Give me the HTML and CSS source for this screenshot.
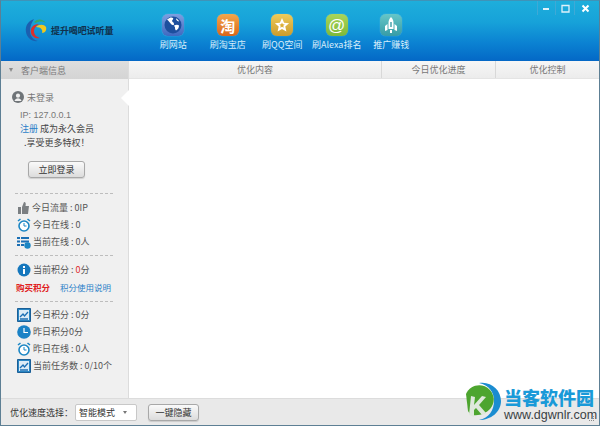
FILE: index.html
```html
<!DOCTYPE html>
<html lang="zh">
<head>
<meta charset="utf-8">
<title>提升喝吧试听量</title>
<link rel="stylesheet" href="styles.css">
</head>
<body>
<div class="window">
  <header class="top">
    <div class="logo">
      <svg class="logo-mark" width="22" height="26" viewBox="0 0 22 26">
        <path d="M9 2C3 4 0 9 1 15c1 6 6 10 12 9-5-1-8-5-8-10 0-5 2-9 4-12z" fill="#1b5fb0"/>
        <path d="M14 7C8 7 5 11 6 16c1 4 5 6 9 5-3-1-6-3-6-7 0-3 2-5 5-7z" fill="#d9302c"/>
        <path d="M9 5c4-4 9-3 12 1-3-2-7-2-10 0z" fill="#36a86a"/>
        <path d="M11 10c3-3 8-3 10 0 1 3-1 6-4 6 1-3-1-6-6-6z" fill="#f0c81e"/>
      </svg>
      <span class="logo-text">提升喝吧试听量</span>
    </div>
    <nav class="nav">
      <a class="nav-item">
        <span class="tile tile-web"><svg width="18" height="18" viewBox="0 0 18 18"><circle cx="9" cy="9" r="8.500" fill="#1d4f9e"/><path d="M3 3.500C6 1 8 1 9 2c1 1-1 2-1 3s2 1 2 3-2 1-3 0-2-3-4-4.500zM10 9.500c2-1 4-1 5 0 0 2-1 4-3 5-1-1-1-2-1-3s-1-1-1-2zM12 2.500c1 0 3 2 3 3-1 0-3-1-3-3z" fill="#fff"/></svg></span>
        <span class="nav-label">刷网站</span>
      </a>
      <a class="nav-item">
        <span class="tile tile-taobao"><span class="tile-glyph">淘</span></span>
        <span class="nav-label">刷淘宝店</span>
      </a>
      <a class="nav-item">
        <span class="tile tile-qq"><svg width="16" height="16" viewBox="0 0 16 16"><path d="M8 1l2.100 4.700 5 .5-3.800 3.400 1.100 5L8 12l-4.400 2.600 1.100-5L.9 6.200l5-.5z" fill="#fff"/><path d="M8 5.500l.8 1.800 2 .2-1.500 1.300.4 2L8 9.800l-1.700 1 .4-2-1.500-1.300 2-.2z" fill="#dcae35"/></svg></span>
        <span class="nav-label">刷QQ空间</span>
      </a>
      <a class="nav-item">
        <span class="tile tile-alexa"><span class="tile-at">@</span></span>
        <span class="nav-label">刷Alexa排名</span>
      </a>
      <a class="nav-item">
        <span class="tile tile-promo"><svg width="14" height="16" viewBox="0 0 14 16"><path d="M7 0c2 2 2.500 4 2.500 6v6h-5V6C4.500 4 5 2 7 0zM3.500 7v6L1 14V9zM10.500 7v6l2.500 1V9zM6 13h2v3H6z" fill="#fff"/><path d="M6.300 5h1.400v5H6.300z" fill="#3a9ca6"/></svg></span>
        <span class="nav-label">推广赚钱</span>
      </a>
    </nav>
    <div class="win-controls">
      <span class="win-btn"><svg width="9" height="9" viewBox="0 0 9 9"><path d="M1 4h6v2H1z" fill="#dff1fa"/></svg></span>
      <span class="win-btn win-max"><svg width="9" height="9" viewBox="0 0 9 9"><path d="M1 1.500h7v6.500H1z" fill="none" stroke="#dff1fa" stroke-width="1.300"/></svg></span>
      <span class="win-btn win-close"><svg width="9" height="9" viewBox="0 0 9 9"><path d="M1.500 1.500l6 6M7.500 1.500l-6 6" stroke="#fff" stroke-width="2"/></svg></span>
    </div>
  </header>

  <div class="middle">
    <aside class="side">
      <div class="side-head"><span class="caret"></span>客户端信息</div>
      <div class="side-body">
        <span class="notch"></span>
        <div class="user"><svg width="12" height="12" viewBox="0 0 12 12"><circle cx="6" cy="6" r="6" fill="#6f7478"/><circle cx="6" cy="4.700" r="2.100" fill="#f0f0f0"/><path d="M2.500 10c.5-2 2-2.800 3.500-2.800S9 8 9.500 10z" fill="#f0f0f0"/></svg>未登录</div>
        <div class="ip">IP: 127.0.0.1</div>
        <div class="promo"><a class="link">注册</a> 成为永久会员</div>
        <div class="promo promo-b">.享受更多特权！</div>
        <button class="btn btn-login">立即登录</button>
        <div class="rule rule-first"></div>
        <ul class="stats">
          <li><svg width="13" height="14" viewBox="0 0 13 14"><path d="M1 6h3v7H1zM5 6l2-5c2 0 2 2 1.500 4H12l-1 8H5z" fill="#7b7f82"/></svg><span>今日流量 : 0IP</span></li>
          <li><svg width="14" height="14" viewBox="0 0 14 14"><circle cx="7" cy="8" r="5" fill="#fff" stroke="#1b86c4" stroke-width="1.600"/><path d="M7 5v3h2.500" fill="none" stroke="#1b86c4"/><path d="M1 3l2.500-2M13 3l-2.500-2" stroke="#1b86c4" stroke-width="1.600"/></svg><span>今日在线 : 0</span></li>
          <li><svg width="14" height="14" viewBox="0 0 14 14"><path d="M0 2h3v2H0zM4 2h8v2H4zM0 5.500h3v2H0zM4 5.500h8v2H4zM0 9h3v2H0zM4 9h3v2H4z" fill="#1b6fb4"/><circle cx="10.500" cy="10.500" r="3.200" fill="#1b86c4"/></svg><span>当前在线 : 0人</span></li>
        </ul>
        <div class="rule"></div>
        <ul class="stats stats-score">
          <li><svg width="14" height="14" viewBox="0 0 14 14"><circle cx="7" cy="7" r="6.500" fill="#1577bd"/><path d="M6 3h2v2H6zM6 6h2v5H6z" fill="#fff"/></svg><span>当前积分 : <em class="red">0</em>分</span></li>
        </ul>
        <div class="buy"><a class="buy-link">购买积分</a><a class="link">积分使用说明</a></div>
        <div class="rule"></div>
        <ul class="stats stats-last">
          <li><svg width="14" height="14" viewBox="0 0 14 14"><path d="M.5.500h13v13H.5z" fill="#2a86c4" stroke="#1b5f96"/><path d="M2 2h10v10H2z" fill="#dcecf6"/><path d="M3 9l3-3 1.500 2L11 4M3 11h8" fill="none" stroke="#1b6fb4" stroke-width="1.300"/></svg><span>今日积分 : 0分</span></li>
          <li><svg width="14" height="14" viewBox="0 0 14 14"><circle cx="7" cy="7" r="6.800" fill="#1a82c6"/><path d="M7 3v4.500h4" fill="none" stroke="#fff" stroke-width="1.200"/></svg><span>昨日积分0分</span></li>
          <li><svg width="14" height="14" viewBox="0 0 14 14"><circle cx="7" cy="8" r="5" fill="#fff" stroke="#1b86c4" stroke-width="1.600"/><path d="M7 5v3h2.500" fill="none" stroke="#1b86c4"/><path d="M1 3l2.500-2M13 3l-2.500-2" stroke="#1b86c4" stroke-width="1.600"/></svg><span>昨日在线 : 0人</span></li>
          <li><svg width="14" height="14" viewBox="0 0 14 14"><path d="M.5.500h13v13H.5z" fill="#2a86c4" stroke="#1b5f96"/><path d="M2 2h10v10H2z" fill="#dcecf6"/><path d="M3 9l3-3 1.500 2L11 4M3 11h8" fill="none" stroke="#1b6fb4" stroke-width="1.300"/></svg><span>当前任务数 : 0/10个</span></li>
        </ul>
      </div>
    </aside>
    <main class="content">
      <div class="thead">
        <div class="th th-a">优化内容</div>
        <div class="th th-b">今日优化进度</div>
        <div class="th th-c">优化控制</div>
      </div>
    </main>
  </div>

  <footer class="bottom">
    <span class="speed-label">优化速度选择：</span>
    <span class="select">智能模式<span class="select-caret"></span></span>
    <button class="btn btn-hide">一键隐藏</button>
  </footer>

  <div class="watermark">
    <svg class="wm-logo" width="39" height="39" viewBox="0 0 39 39">
      <path d="M16 1c12-2 22 7 22 18S28 38 16 38c10-2 15-10 15-19S26 3 16 1z" fill="#1b8cd0"/>
      <path d="M3 12C7 3 19 0 27 8c5 6 5 13 0 19-4 4-10 7-17 6-3-1-4-2-5-4z" fill="#4da52f"/>
      <path d="M8 14l4 1-1 8 8-9 4 1-7 8 7 8-4 2-6-7-2 2 0 7-5-2z" fill="#dfe8dc"/>
    </svg>
    <div class="wm-title">当客软件园</div>
    <div class="wm-url">www.dgwnlr.com</div>
  </div>
  <svg class="grip" width="7" height="7" viewBox="0 0 7 7"><path d="M5 0h1v1H5zM3 2h1v1H3zM5 2h1v1H5zM1 4h1v1H1zM3 4h1v1H3zM5 4h1v1H5z" fill="#8a8a8a"/></svg>
</div>
</body>
</html>
```
FILE: styles.css
```css
* { box-sizing: border-box; }
html, body { margin: 0; padding: 0; }
body {
  width: 600px;
  height: 426px;
  overflow: hidden;
  font-family: "Noto Sans CJK SC", "Liberation Sans", sans-serif;
  font-size: 9px;
  color: #555;
}
.window {
  position: relative;
  width: 600px;
  height: 426px;
  display: flex;
  flex-direction: column;
  background: #fff;
  border: 1px solid #5d7f94;
  border-top-color: #3f93b8;
  overflow: hidden;
}
.top {
  height: 60px;
  flex: none;
  display: flex;
  background: linear-gradient(#1eaedb 0%, #17a2d9 35%, #0b82d2 70%, #0468c6 100%);
}
.logo {
  width: 145px;
  flex: none;
  display: flex;
  align-items: center;
  padding: 0 0 2px 24px;
}
.logo-mark { margin-right: 4px; flex: none; }
.logo-text { font-size: 9px; font-weight: 700; color: #10304c; white-space: nowrap; letter-spacing: -.1px; }
.nav { display: flex; padding-top: 13px; }
.nav-item {
  width: 54.500px;
  display: flex;
  flex-direction: column;
  align-items: center;
  gap: 3px;
}
.tile {
  width: 22px;
  height: 22px;
  border-radius: 6px;
  display: flex;
  align-items: center;
  justify-content: center;
  box-shadow: 0 0 1px #fff8;
}
.tile-web { background: linear-gradient(#7e9fe0, #3f69c0); }
.tile-taobao { background: linear-gradient(#f4a74a, #d8651a); }
.tile-qq { background: linear-gradient(#eecb5a, #cc9c2c); }
.tile-alexa { background: linear-gradient(#a9d55a, #7db93a); }
.tile-promo { background: linear-gradient(#66c6c8, #379ca6); }
.tile-glyph { font-size: 15px; line-height: 1; font-weight: 700; color: #fff; }
.tile-at { font-family: "Liberation Sans", sans-serif; font-size: 17px; line-height: 1; color: #fff; }
.nav-label { font-size: 9px; line-height: 12px; color: #d8eefa; white-space: nowrap; }
.win-controls {
  margin-left: auto;
  display: flex;
  height: 14px;
  margin-right: 3px;
}
.win-btn {
  width: 18px;
  height: 14px;
  display: flex;
  align-items: center;
  justify-content: center;
  border-left: 1px solid #3fa9d6;
}
.win-max { width: 19px; }
.win-close { width: 22px; }
.middle { flex: 1; display: flex; min-height: 0; }
.side {
  width: 128px;
  flex: none;
  display: flex;
  flex-direction: column;
  background: #f0f0f0;
  border-right: 1px solid #dcdcdc;
}
.side-head {
  height: 18px;
  flex: none;
  display: flex;
  align-items: center;
  padding-left: 8px;
  background: linear-gradient(#dedede, #d4d4d4);
  color: #7a7a7a;
  font-size: 9px;
}
.caret {
  width: 0;
  height: 0;
  margin-right: 8px;
  border-left: 2.500px solid transparent;
  border-right: 2.500px solid transparent;
  border-top: 4px solid #8a8a8a;
}
.side-body { position: relative; flex: 1; padding: 11px 0 0 11px; }
.notch {
  position: absolute;
  right: -1px;
  top: 11px;
  width: 8px;
  height: 16px;
  background: #fff;
  clip-path: polygon(100% 0, 0 50%, 100% 100%);
}
.user { display: flex; align-items: center; gap: 3px; height: 14px; color: #777; }
.ip { margin: 4px 0 0 8px; line-height: 14px; color: #777; font-family: "Liberation Sans", sans-serif; }
.promo { margin: 0 0 0 8px; line-height: 14px; color: #444; }
.promo-b { margin-left: 12px; }
.link { color: #2a7fc8; }
.btn {
  display: block;
  padding: 0;
  height: 17px;
  border: 1px solid #a8a8a8;
  border-radius: 3px;
  background: linear-gradient(#fafafa, #dcdcdc);
  font: inherit;
  color: #333;
  box-shadow: 0 1px 1px #0002;
}
.btn-login { width: 57px; margin: 11px 0 0 16px; }
.rule { width: 98px; margin: 0 0 0 3px; border-top: 1px dashed #bdbdbd; }
.rule-first { margin-top: 15px; }
.stats { list-style: none; margin: 0; padding: 5px 0 5px 5px; }
.stats li { display: flex; align-items: center; gap: 2px; height: 17px; color: #555; white-space: nowrap; }
.stats svg { flex: none; }
.stats-score { padding-bottom: 0; }
.stats-last { padding-top: 4px; }
.red { color: #e02c2c; font-style: normal; }
.buy { display: flex; gap: 10px; padding: 1px 0 6px 4px; line-height: 16px; font-size: 8.500px; }
.buy-link { color: #e02020; font-weight: 700; }
.content { flex: 1; min-width: 0; }
.thead {
  height: 18px;
  display: flex;
  background: linear-gradient(#f6f6f6, #ececec);
  border-bottom: 1px solid #e4e4e4;
  color: #777;
}
.th { display: flex; align-items: center; justify-content: center; border-right: 1px solid #d8d8d8; }
.th-a { width: 253px; }
.th-b { width: 114px; }
.th-c { flex: 1; border-right: 0; }
.bottom {
  height: 27px;
  flex: none;
  display: flex;
  align-items: center;
  padding-left: 9px;
  background: #e9e9e9;
  border-top: 1px solid #dcdcdc;
  color: #333;
}
.speed-label { width: 65px; flex: none; }
.select {
  width: 62px;
  height: 17px;
  display: flex;
  align-items: center;
  padding-left: 3px;
  position: relative;
  background: #fff;
  border: 1px solid #c8c8c8;
  border-radius: 2px;
}
.select-caret {
  position: absolute;
  right: 9px;
  top: 6px;
  width: 0;
  height: 0;
  border-left: 2.500px solid transparent;
  border-right: 2.500px solid transparent;
  border-top: 3px solid #777;
}
.btn-hide { width: 51px; margin-left: 11px; }
.watermark {
  position: absolute;
  left: 462px;
  top: 381px;
  width: 136px;
  height: 44px;
}
.wm-logo { position: absolute; left: 0; top: 0; }
.wm-title {
  position: absolute;
  left: 41px;
  top: 6px;
  height: 18px;
  font-size: 18px;
  line-height: 18px;
  font-weight: 900;
  color: #1a9ad8;
  white-space: nowrap;
}
.wm-url {
  position: absolute;
  left: 41px;
  top: 27px;
  font-family: "Liberation Sans", sans-serif;
  font-size: 12.500px;
  line-height: 13px;
  color: #3a3f44;
  white-space: nowrap;
}
.grip { position: absolute; right: 4px; bottom: 2px; }
```
